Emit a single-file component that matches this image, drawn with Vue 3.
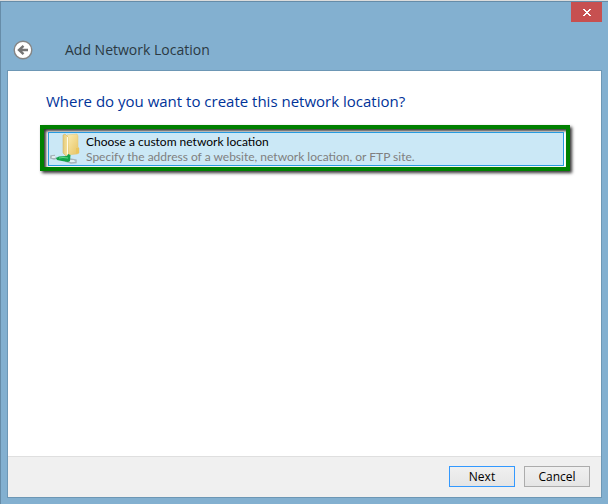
<template>
  <div class="window">
    <div class="title-bar">
      <button class="close" type="button" aria-label="Close">
        <svg width="8" height="7" viewBox="0 0 8 7" shape-rendering="crispEdges"><path d="M0 0h2v1h1v1h2V1h1V0h2v1H7v1H6v1H5v1h1v1h1v1h1v1H6V6H5V5H3v1H2v1H0V6h1V5h1V4h1V3H2V2H1V1H0z" fill="#fff" /></svg>
      </button>
    </div>
    <header class="header">
      <button class="back" type="button" aria-label="Back">
        <svg width="20" height="20" viewBox="0 0 20 20">
          <circle cx="10" cy="10" r="8.8" fill="#fff" stroke="#858585" stroke-width="1.4" />
          <path d="M15 10H6.5M10.5 5.8L6 10L10.5 14.2" fill="none" stroke="#747474" stroke-width="2.4" />
        </svg>
      </button>
      <h1>Add Network Location</h1>
    </header>
    <main class="panel">
      <section class="content">
        <h2>Where do you want to create this network location?</h2>
        <div class="highlight">
          <button v-for="item in locations" :key="item.title" class="location" type="button">
            <svg class="folder" width="30" height="32" viewBox="0 0 30 32">
              <defs>
                <linearGradient id="front" x1="0" y1="0" x2="1" y2="1">
                  <stop offset="0" stop-color="#fbeeb5" />
                  <stop offset="1" stop-color="#e6c260" />
                </linearGradient>
                <linearGradient id="side" x1="0" y1="0" x2="1" y2="0">
                  <stop offset="0" stop-color="#e6cb7c" />
                  <stop offset="1" stop-color="#f6e4a0" />
                </linearGradient>
              </defs>
              <path d="M17 2L27 1L28 3V14L29 15V20L27 21L18 22z" fill="url(#front)" stroke="#e3c775" stroke-width=".5" />
              <path d="M13 2L15 1L18 4V22L16 23L13 20z" fill="url(#side)" stroke="#cfae58" stroke-width=".5" />
              <path d="M17.5 4V22" stroke="#fffbe8" stroke-width="1" />
              <path d="M26 15L29 15V20L26 21z" fill="#e9c55f" />
              <path d="M5 22.5L1 23L0.5 25L4 26L7 25M20 26L26 27V29.5L21 30L15 28" fill="none" stroke="#a7b4ba" stroke-width="1.4" />
              <path d="M2 24H5M20 28H24" fill="none" stroke="#edf2f3" stroke-width="1.4" />
              <path d="M6 25L9 23.5L17 23L18 21L20.5 22L20 28L18 29L12 28L7 27z" fill="#12a348" />
              <path d="M9 25L13 24.5L18 25" fill="none" stroke="#62db8b" stroke-width="1" />
            </svg>
            <span class="text">
              <span class="name">{{ item.title }}</span>
              <span class="description">{{ item.description }}</span>
            </span>
          </button>
        </div>
      </section>
      <footer class="footer">
        <button class="btn primary" type="button">Next</button>
        <button class="btn" type="button">Cancel</button>
      </footer>
    </main>
  </div>
</template>
<script setup>
const locations = [
  { title: 'Choose a custom network location', description: 'Specify the address of a website, network location, or FTP site.' }
]
</script>
<style>
body { background: #dcdcdc; }
</style>
<style scoped>
.window { box-sizing: border-box; display: flex; flex-direction: column; min-height: calc(100vh - 1px); margin-top: 1px; padding: 0 6px 6px; border: 1px solid #668ca8; border-right: 0; border-bottom: 0; background: #83b0d0; font-family: "Open Sans", "Noto Sans", sans-serif; font-size: 12px; }
button { margin: 0; padding: 0; font-family: inherit; font-size: 12px; color: #000; }
.title-bar { display: flex; justify-content: flex-end; }
.close { display: flex; align-items: center; justify-content: center; width: 31px; height: 20px; border: 0; background: #c75050; }
.header { display: flex; align-items: center; gap: 32px; height: 48px; padding: 0 6px; box-sizing: border-box; }
.back { width: 20px; height: 20px; margin-top: 8px; border: 0; background: none; }
.back svg { display: block; }
h1 { margin: 8px 0 0; font-size: 14px; line-height: 20px; font-weight: 400; color: #2b3942; }
.panel { flex: 1; display: flex; flex-direction: column; border: 1px solid #6d97b5; background: #fff; }
.content { flex: 1; padding: 19px 31px 20px 32px; }
h2 { margin: 0 6px 13px; font-size: 15px; line-height: 22px; font-weight: 400; color: #003399; }
.highlight { padding: 3px 2px 1px 4px; border: 4px solid #008000; background: #fff; box-shadow: 2px 2px 3px #333, inset 2px 2px 3px #333; }
.location { display: flex; width: 100%; height: 34px; box-sizing: border-box; border: 1px solid #269be0; background: #cbe8f6; font-family: Lato, "Open Sans", sans-serif; text-align: left; }
.folder { flex: none; margin: 0 6px 0 1px; }
.text { display: flex; flex-direction: column; padding-top: 1px; line-height: 15px; white-space: nowrap; }
.description { color: #808080; }
.footer { display: flex; justify-content: flex-end; gap: 9px; padding: 9px 11px 10px; border-top: 1px solid #dfdfdf; background: #f0f0f0; }
.btn { width: 66px; height: 21px; box-sizing: border-box; border: 1px solid #acacac; background: linear-gradient(#f0f0f0, #e5e5e5); line-height: 18px; }
.btn.primary { border-color: #3399ff; }
</style>
